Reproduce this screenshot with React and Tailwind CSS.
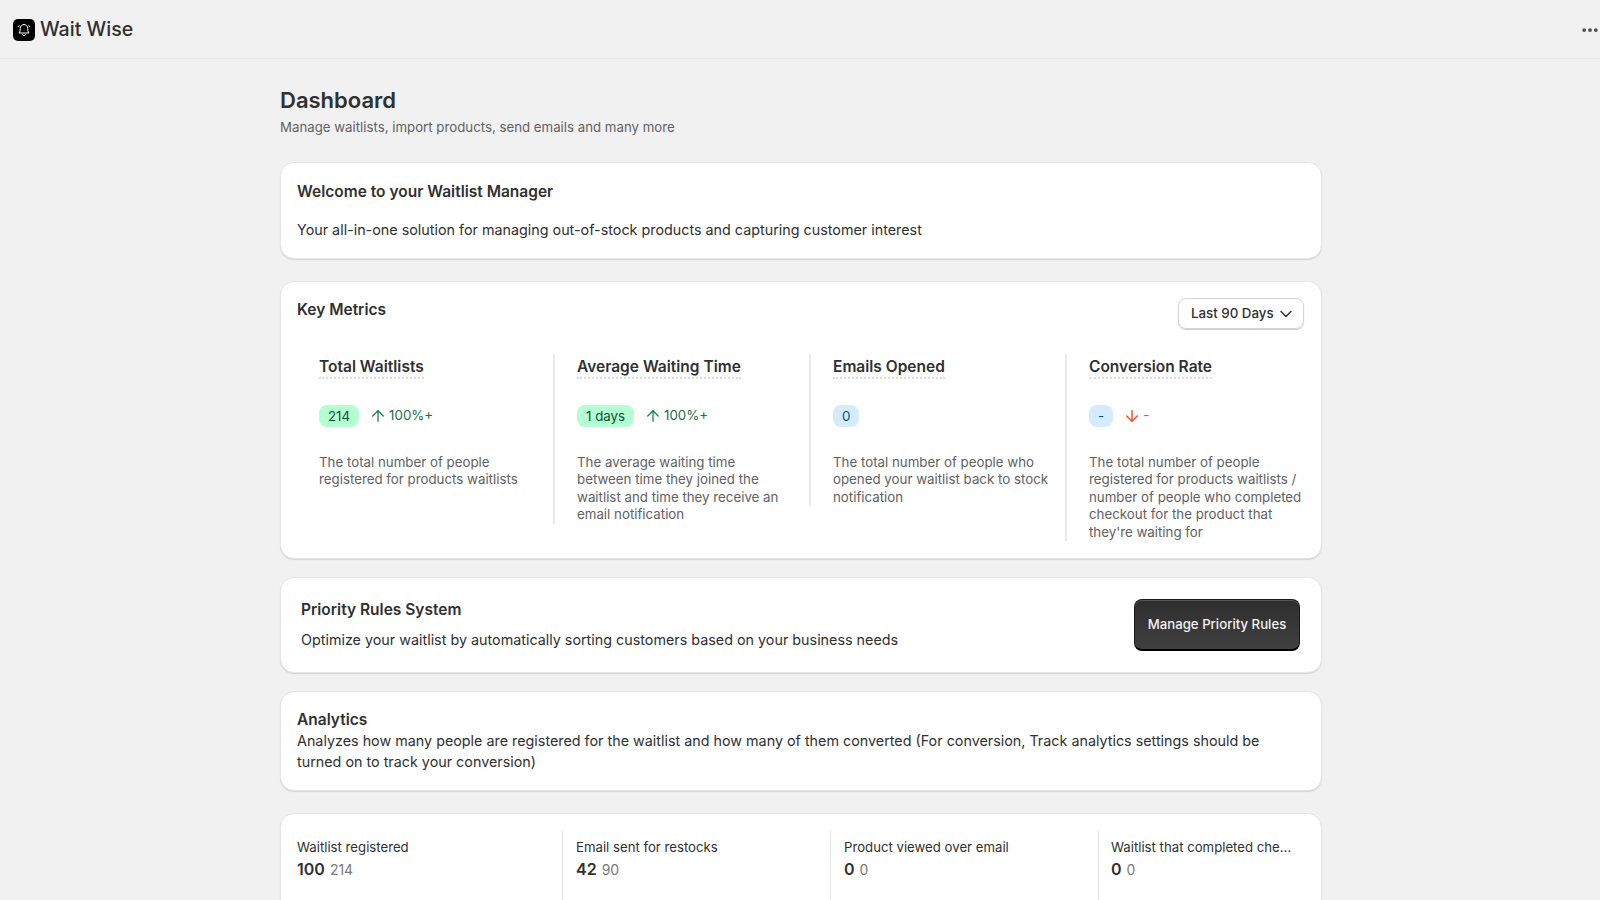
import { ArrowUp, ArrowDown, ChevronDown, Ellipsis } from "lucide-react";

const metrics = [
  {
    title: "Total Waitlists",
    value: "214",
    tone: "green",
    trend: "100%+",
    text: "The total number of people registered for products waitlists",
  },
  {
    title: "Average Waiting Time",
    value: "1 days",
    tone: "green",
    trend: "100%+",
    text: "The average waiting time between time they joined the waitlist and time they receive an email notification",
  },
  {
    title: "Emails Opened",
    value: "0",
    tone: "blue",
    text: "The total number of people who opened your waitlist back to stock notification",
  },
  {
    title: "Conversion Rate",
    value: "-",
    tone: "blue",
    down: true,
    trend: "-",
    text: "The total number of people registered for products waitlists / number of people who completed checkout for the product that they're waiting for",
  },
];

const stats = [
  { label: "Waitlist registered", value: "100", prev: "214" },
  { label: "Email sent for restocks", value: "42", prev: "90" },
  { label: "Product viewed over email", value: "0", prev: "0" },
  { label: "Waitlist that completed che...", value: "0", prev: "0" },
];

function Card({ className, children }) {
  return (
    <div className={"bg-white rounded-[14px] border border-[#e6e6e6] shadow-[0_1px_1px_rgba(0,0,0,0.12)] " + className}>
      {children}
    </div>
  );
}

function BellLogo() {
  return (
    <svg width="16" height="16" viewBox="0 0 16 16" fill="none" stroke="white" strokeWidth="1" strokeLinecap="round" strokeLinejoin="round">
      <path d="M8 2.5c-2.3 0-3.8 1.8-3.8 4v2.2L3 11h10l-1.2-2.3V6.5c0-2.2-1.5-4-3.8-4z" />
      <path d="M6.7 12.8a1.4 1.4 0 0 0 2.6 0" />
      <path d="M3.2 3.6l-.8 1" />
      <path d="M12.8 3.6l.8 1" />
    </svg>
  );
}

function Metric({ item, index }) {
  const isGreen = item.tone === "green";
  const descPad = index === 1 ? "pr-[17px]" : "pr-[8px]";

  return (
    <div className={index > 0 ? "self-start border-l-2 border-[#ebebeb] pl-[22px]" : "self-start pl-[22px]"}>
      <h3 className="inline-block text-[15.5px] leading-[21px] font-semibold text-[#303030] border-b-2 border-dotted border-[#dcdcdc]">
        {item.title}
      </h3>

      <div className="flex items-center mt-[26.5px] h-[22px]">
        <span
          className={
            isGreen
              ? "rounded-lg bg-[#b4fed2] text-[#0c5132] text-[13.3px] leading-[22px] px-[9px]"
              : "rounded-lg bg-[#d5ebff] text-[#00527c] text-[13.3px] leading-[22px] px-[9px]"
          }
        >
          {item.value}
        </span>

        {item.trend && (
          <span className={item.down ? "flex items-center ml-[10px] text-[13.3px] text-[#b5605a]" : "flex items-center ml-[10px] text-[13.3px] text-[#1f6b48]"}>
            {item.down ? (
              <ArrowDown size={18} strokeWidth={2} className="text-[#f04f2e] mr-[2px]" />
            ) : (
              <ArrowUp size={18} strokeWidth={1.75} className="text-[#1a7f52] mr-[2px]" />
            )}
            {item.trend}
          </span>
        )}
      </div>

      <p className={"mt-[26.5px] text-[13.3px] leading-[17.5px] text-[#616161] " + (index === 3 ? "pr-0" : descPad)}>
        {item.text}
      </p>
    </div>
  );
}

export default function App() {
  return (
    <div className="h-[900px] overflow-hidden bg-[#f1f1f1] font-['Inter',sans-serif]">
      <header className="h-[59px] pt-[2px] flex items-center justify-between border-b border-[#e8e8e8] pl-[13px]">
        <div className="flex items-center gap-[5px]">
          <div className="w-[22px] h-[22px] rounded-[5px] bg-black flex items-center justify-center">
            <BellLogo />
          </div>
          <span className="text-[19.6px] font-medium text-[#303030]">Wait Wise</span>
        </div>
        <Ellipsis size={20} strokeWidth={2.5} className="text-[#4a4a4a]" />
      </header>

      <main className="w-[1042px] ml-[280px] pt-[28px]">
        <h1 className="text-[22px] leading-[27px] font-semibold text-[#303030]">Dashboard</h1>
        <p className="mt-[2.5px] text-[13.25px] leading-[20px] text-[#616161]">
          Manage waitlists, import products, send emails and many more
        </p>

        <Card className="mt-[25px] h-[97px] pl-[16px] pr-[17px] pt-[17px]">
          <h2 className="text-[15.5px] leading-[23px] font-semibold text-[#303030]">Welcome to your Waitlist Manager</h2>
          <p className="mt-[16px] text-[14.34px] leading-[22px] text-[#303030]">
            Your all-in-one solution for managing out-of-stock products and capturing customer interest
          </p>
        </Card>

        <Card className="mt-[22px] h-[278px] pl-[16px] pr-[17px] pt-[17px]">
          <div className="flex items-start justify-between">
            <h2 className="text-[15.5px] leading-[22px] font-semibold text-[#303030]">Key Metrics</h2>
            <button className="-mt-[1px] h-[31px] w-[126px] pl-[12px] pt-[1px] rounded-lg border border-[#d4d4d4] shadow-[0_1px_1px_rgba(0,0,0,0.2)] flex items-center gap-[2px] text-[13.3px] font-medium text-[#303030]">
              Last 90 Days
              <ChevronDown size={20} strokeWidth={1.75} />
            </button>
          </div>

          <div className="grid grid-cols-[256px_256px_256px_1fr] mt-[25px]">
            {metrics.map((m, i) => (
              <Metric key={m.title} item={m} index={i} />
            ))}
          </div>
        </Card>

        <Card className="mt-[18px] h-[96px] pt-[1px] pl-[20px] pr-[21px] flex items-center justify-between">
          <div>
            <h2 className="text-[15.5px] leading-[22px] font-semibold text-[#303030]">Priority Rules System</h2>
            <p className="mt-[8px] text-[14.34px] leading-[22px] text-[#303030]">
              Optimize your waitlist by automatically sorting customers based on your business needs
            </p>
          </div>
          <button className="w-[166px] h-[52px] rounded-lg bg-gradient-to-b from-[#2e2e2e] to-[#404040] border border-[#1a1a1a] border-b-2 border-b-black shadow-[inset_0_1px_0_rgba(255,255,255,0.2)] text-[13.2px] font-medium text-[#f2f2f2]">
            Manage Priority Rules
          </button>
        </Card>

        <Card className="mt-[18px] h-[100px] pl-[16px] pr-[17px] pt-[17px]">
          <h2 className="text-[15.5px] leading-[21px] font-semibold text-[#303030]">Analytics</h2>
          <p className="text-[14.34px] leading-[21.6px] text-[#303030]">
            Analyzes how many people are registered for the waitlist and how many of them converted (For conversion, Track analytics settings should be turned on to track your conversion)
          </p>
        </Card>

        <Card className="mt-[22px] h-[120px] pl-[16px] pr-[17px] pt-[17px]">
          <div className="grid grid-cols-[266px_268px_268px_1fr]">
            {stats.map((s, i) => (
              <div key={s.label} className={i < 3 ? "border-r border-[#e3e3e3] h-[100px] pt-[6px]" : "pl-[12px] pt-[6px]"}>
                <div className={i > 0 && i < 3 ? "pl-[13px]" : ""}>
                  <p className="text-[13.2px] leading-[20px] text-[#303030]">{s.label}</p>
                  <p className="leading-[24px]">
                    <span className="text-[16px] font-semibold text-[#303030]">{s.value}</span>
                    <span className="ml-[5px] text-[14px] text-[#7a7a7a]">{s.prev}</span>
                  </p>
                </div>
              </div>
            ))}
          </div>
        </Card>
      </main>
    </div>
  );
}
